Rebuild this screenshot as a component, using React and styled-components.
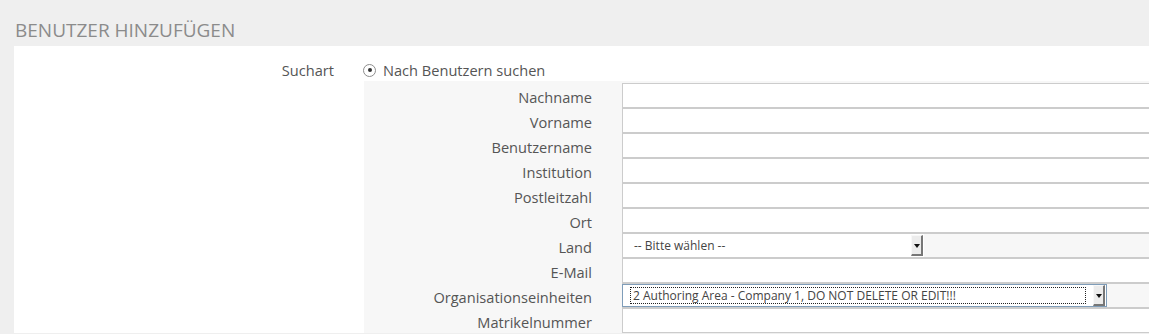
import React from 'react'
import styled, { createGlobalStyle } from 'styled-components'

const GlobalStyle = createGlobalStyle`
  body {
    margin: 0;
    background: #efefef;
    font-family: 'Open Sans', 'DejaVu Sans', sans-serif;
    color: #555;
    overflow: hidden;
  }
`

const Title = styled.h2`
  margin: 0;
  padding: 18px 0 4px 15px;
  font-size: 19px;
  line-height: 24px;
  font-weight: 400;
  text-transform: uppercase;
  color: #8b8b8b;
`

const Panel = styled.div`
  margin-left: 14px;
  background: #fff;
  padding-top: 12px;
  display: grid;
  grid-template-columns: 350px 1fr;
`

const MainLabel = styled.div`
  text-align: right;
  padding: 1px 30px 0 0;
  font-size: 14.6px;
  line-height: 22px;
`

const Radio = styled.label`
  display: flex;
  align-items: center;
  gap: 7px;
  height: 22px;
  padding-top: 1px;
  font-size: 14.6px;
  color: #555;
  margin-left: -1px;
`

const RadioDot = styled.span`
  width: 11px;
  height: 11px;
  border-radius: 50%;
  border: 1px solid #8d8d8d;
  background: #fff;
  display: flex;
  align-items: center;
  justify-content: center;

  &::after {
    content: '';
    width: 4px;
    height: 4px;
    border-radius: 50%;
    background: #333;
  }
`

const SubPanel = styled.div`
  grid-column: 2;
  background: #f7f7f7;
  padding-top: 2px;
  display: grid;
  grid-template-columns: 258px 1fr;
`

const FieldLabel = styled.div`
  height: 25px;
  padding: 3px 30px 0 0;
  box-sizing: border-box;
  text-align: right;
  font-size: 14.6px;
  line-height: 22px;
  color: #555;
`

const TextInput = styled.input`
  display: block;
  box-sizing: border-box;
  width: 100%;
  height: 25px;
  margin: 0;
  border: 1px solid #ccc;
  border-right: none;
  background: #fff;
  outline: none;
`

const SelectCell = styled.div`
  box-sizing: border-box;
  height: 25px;
  border-top: 1px solid #ccc;
  border-bottom: 1px solid #ccc;
  display: flex;
`

const Select = styled.div`
  box-sizing: border-box;
  width: ${p => p.$width}px;
  height: 23px;
  background: #fff;
  border-left: 1px solid #ccc;
  border: ${p => (p.$focused ? '1px solid #7f9db9' : undefined)};
  display: flex;
  align-items: center;
  padding: 0 1px 0 ${p => (p.$focused ? 8 : 9)}px;
  font-size: 12px;
  color: #444;
`

const SelectText = styled.span`
  flex: 1;
  white-space: nowrap;
  line-height: 15px;
  padding: 0 2px;
  margin-right: 8px;
  outline: ${p => (p.$focused ? '1px dotted #222' : 'none')};
`

const DropButton = styled.span`
  box-sizing: border-box;
  width: 12px;
  height: 21px;
  background: #ececec;
  border-top: 1px solid #f8f8f8;
  border-left: 1px solid #f8f8f8;
  border-right: 2px solid #777;
  border-bottom: 2px solid #777;
  display: flex;
  align-items: center;
  justify-content: center;

  &::after {
    content: '';
    border-left: 3px solid transparent;
    border-right: 3px solid transparent;
    border-top: 4px solid #111;
    margin-top: 1px;
  }
`

const fields = [
  { label: 'Nachname' },
  { label: 'Vorname' },
  { label: 'Benutzername' },
  { label: 'Institution' },
  { label: 'Postleitzahl' },
  { label: 'Ort' },
  { label: 'Land', select: '-- Bitte wählen --', width: 302 },
  { label: 'E-Mail' },
  {
    label: 'Organisationseinheiten',
    select: '2 Authoring Area - Company 1, DO NOT DELETE OR EDIT!!!',
    width: 485,
    focused: true,
  },
  { label: 'Matrikelnummer' },
]

export default function App() {
  return (
    <>
      <GlobalStyle />
      <Title>Benutzer hinzufügen</Title>
      <Panel>
        <MainLabel>Suchart</MainLabel>
        <Radio>
          <RadioDot />
          Nach Benutzern suchen
        </Radio>
        <SubPanel>
          {fields.map(f => (
            <React.Fragment key={f.label}>
              <FieldLabel>{f.label}</FieldLabel>
              {f.select ? (
                <SelectCell>
                  <Select $width={f.width} $focused={f.focused}>
                    <SelectText $focused={f.focused}>{f.select}</SelectText>
                    <DropButton />
                  </Select>
                </SelectCell>
              ) : (
                <TextInput type="text" />
              )}
            </React.Fragment>
          ))}
        </SubPanel>
      </Panel>
    </>
  )
}
